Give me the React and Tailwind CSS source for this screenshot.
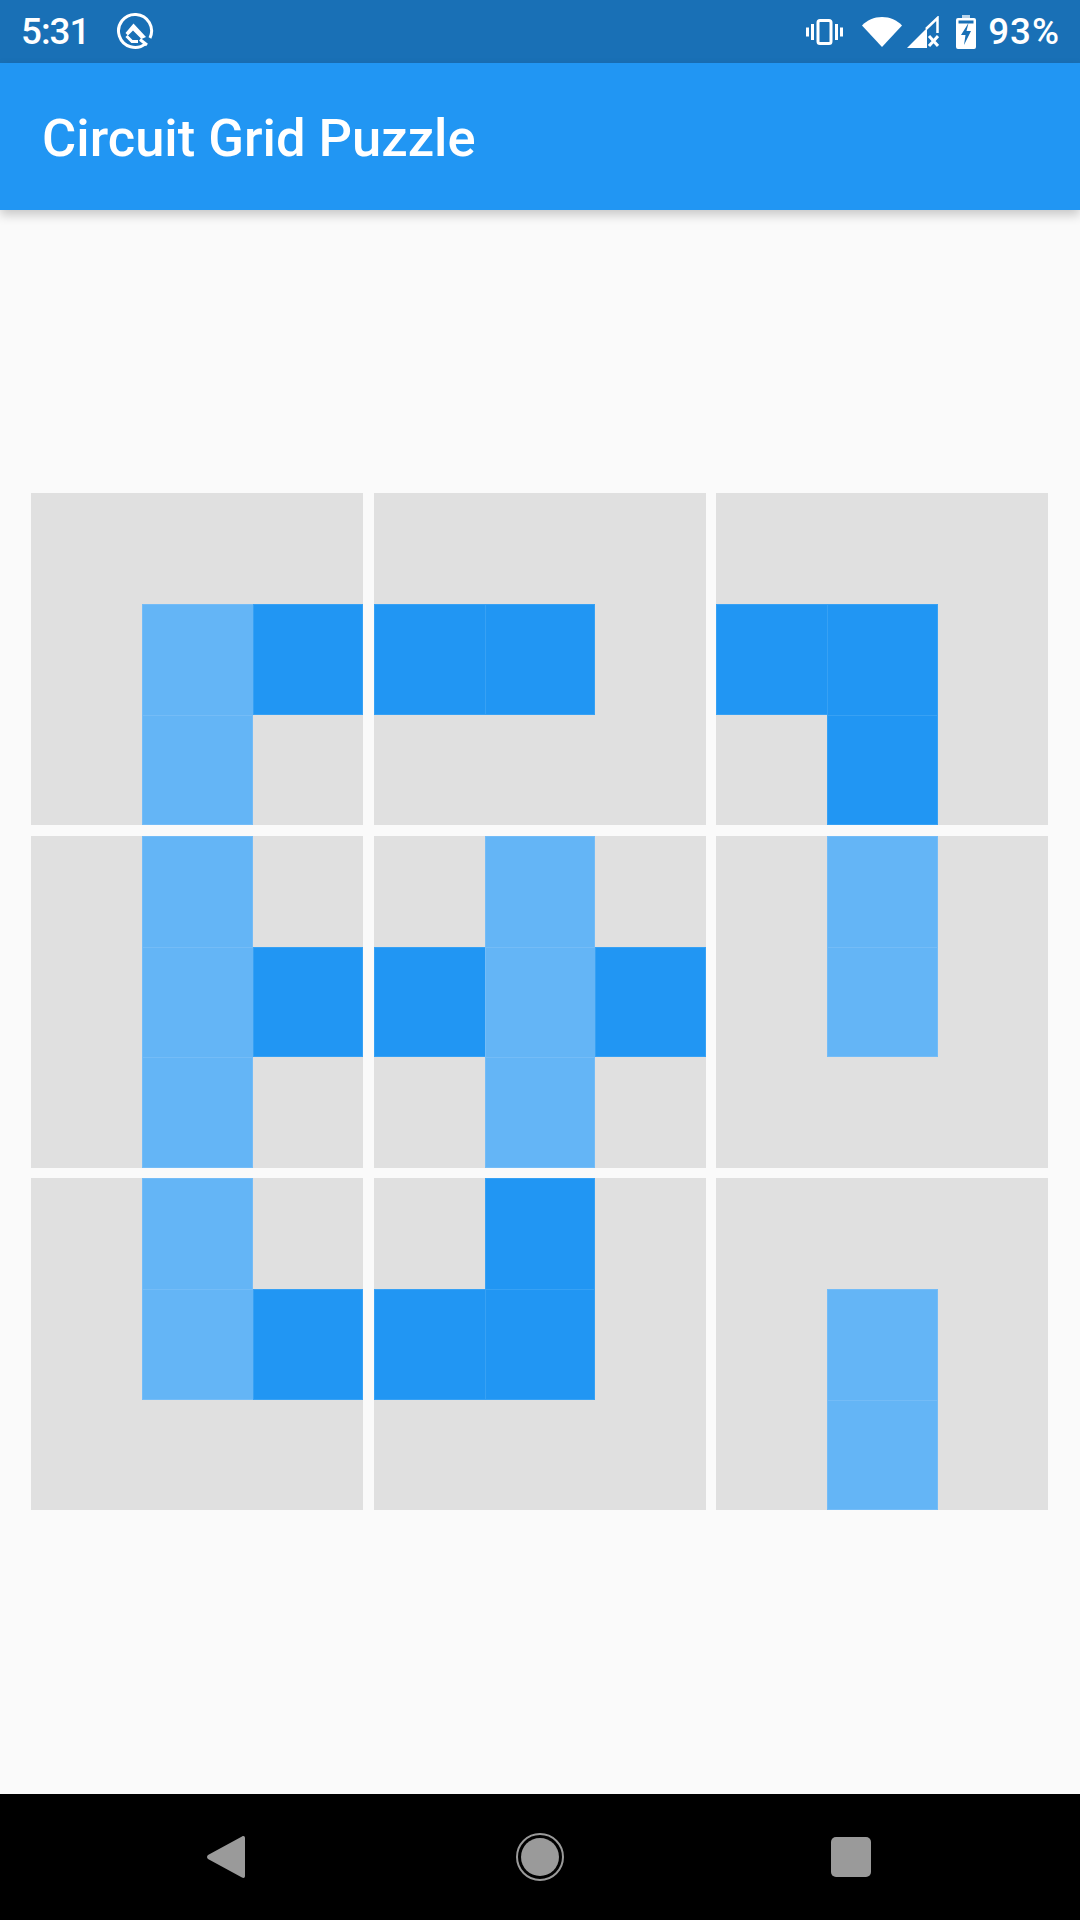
const tiles = [
  ["...", ".LD", ".L."],
  ["...", "DD.", "..."],
  ["...", "DD.", ".D."],
  [".L.", ".LD", ".L."],
  [".L.", "DLD", ".L."],
  [".L.", ".L.", "..."],
  [".L.", ".LD", "..."],
  [".D.", "DD.", "..."],
  ["...", ".L.", ".L."],
]

function isLit(rows, r, c) {
  const cell = rows[r]?.[c]
  return cell === "L" || cell === "D"
}

function Tile({ rows }) {
  return (
    <div className="grid grid-cols-3 grid-rows-3 aspect-square bg-[#e0e0e0]">
      {rows.map((row, r) =>
        row.split("").map((cell, c) => {
          if (cell === ".") return <div key={c + r * 3} />
          // 1px seam on cell edges, shared edges only drawn once
          const right = isLit(rows, r, c + 1) ? "" : "border-r"
          const bottom = isLit(rows, r + 1, c) ? "" : "border-b"
          return (
            <div
              key={c + r * 3}
              className={`border-t border-l border-white/10 ${right} ${bottom} ${
                cell === "L" ? "bg-[#64b5f6]" : "bg-[#2196f3]"
              }`}
            />
          )
        })
      )}
    </div>
  )
}

function StatusIcons() {
  return (
    <div className="flex items-center">
      {/* vibrate */}
      <svg width="37" height="26" viewBox="0 0 37 26" fill="none" stroke="#fff">
        <rect x="12" y="1.500" width="13" height="23" rx="2" strokeWidth="3" />
        <path d="M6.500 5v16M1.500 8.500v9M30.500 5v16M35.500 8.500v9" strokeWidth="3" />
      </svg>
      {/* wifi */}
      <svg width="40" height="30" viewBox="0 0 40 30" className="ml-[19px]">
        <path d="M0 8.500C5 3.200 12 0 20 0s15 3.200 20 8.500L20 30z" fill="#fff" />
      </svg>
      {/* signal with x */}
      <svg width="32" height="32" viewBox="0 0 32 32" className="ml-[5px]">
        <path d="M0 32L20 12V32z" fill="#fff" />
        <path d="M19 13L30.500 2V17" fill="none" stroke="#fff" strokeWidth="2.500" />
        <path d="M22 20l9 10M31 20l-9 10" stroke="#fff" strokeWidth="3" />
      </svg>
      {/* battery charging */}
      <svg width="20" height="34" viewBox="0 0 20 34" className="ml-[17px]">
        <path d="M6 0h8v3H6z" fill="#fff" fillOpacity="0.7" />
        <path
          fillRule="evenodd"
          fill="#fff"
          d="M2 3h16a2 2 0 0 1 2 2v27a2 2 0 0 1-2 2H2a2 2 0 0 1-2-2V5a2 2 0 0 1 2-2zM2.500 5.500v3h15v-3zM12.500 8L5 20h4.500L8 30l7-14h-4.500z"
        />
      </svg>
      <span className="ml-[12px] pt-[2px] text-[36.75px] leading-none font-medium tracking-[1px] text-white">93%</span>
    </div>
  )
}

export default function App() {
  return (
    <div className="flex flex-col h-[1920px] bg-[#fafafa] font-['Roboto',sans-serif]">
      {/* Status bar */}
      <div className="flex items-center justify-between h-[63px] pl-[21px] pr-[20px] bg-[#1970b6]">
        <div className="flex items-center">
          <span className="w-[65px] pt-[2px] text-[36.75px] leading-none font-medium tracking-[-1px] text-white">5:31</span>
          <svg width="38" height="38" viewBox="0 0 38 38" fill="none" className="ml-[30px] mb-[2px]">
            <path d="M29.600 31.600A16.500 16.500 0 1 1 33.950 26" stroke="#fff" strokeWidth="3" />
            <path d="M17.500 11.500L30 25l-4.500 2L17 18.500l-5 5-2.500-2.500z" fill="#fff" />
            <path d="M10.500 24l5.500 5.500h6M24 27.500l7 5.500" stroke="#fff" strokeWidth="3" />
          </svg>
        </div>
        <StatusIcons />
      </div>

      {/* App bar */}
      <div className="relative z-10 flex items-center h-[147px] pl-[42px] pt-[3px] bg-[#2196f3] shadow-[0_5px_10px_rgba(0,0,0,0.2)]">
        <h1 className="text-[52.5px] leading-none font-medium text-white">Circuit Grid Puzzle</h1>
      </div>

      {/* Puzzle */}
      <div className="flex flex-1 items-center pb-[0.2px]">
        <div className="grid grid-cols-3 gap-[10.5px] w-full pl-[31.4px] pr-[31.6px]">
          {tiles.map((rows, i) => (
            <Tile key={i} rows={rows} />
          ))}
        </div>
      </div>

      {/* Nav bar */}
      <div className="flex items-center h-[126px] pl-[207px] bg-black">
        <svg width="38" height="44" viewBox="0 0 38 44">
          <path d="M35 1.500c1.600-1 3-.3 3 1.500v38c0 1.800-1.400 2.500-3 1.500L1 24c-1.300-1-1.300-3 0-4z" fill="#9a9a9a" />
        </svg>
        <div className="flex items-center justify-center w-[48px] h-[48px] ml-[271px] rounded-full border-2 border-[#9a9a9a]">
          <div className="w-[38px] h-[38px] rounded-full bg-[#9a9a9a]" />
        </div>
        <div className="w-[40px] h-[40px] ml-[267px] rounded-[5px] bg-[#9a9a9a]" />
      </div>
    </div>
  )
}
